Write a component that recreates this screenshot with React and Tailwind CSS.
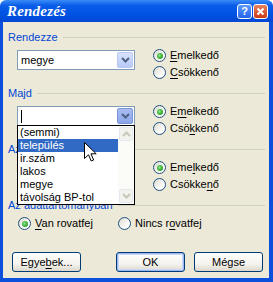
import React from 'react';

const blueText = 'text-[#0046D5]';

function Acc({ text, i }) {
  if (i == null) return <span>{text}</span>;
  return (
    <span>
      {text.slice(0, i)}
      <span className="underline underline-offset-[2px]">{text[i]}</span>
      {text.slice(i + 1)}
    </span>
  );
}

function Radio({ checked, text, u }) {
  return (
    <div className="h-[17px] flex items-center gap-[4px]">
      <div className="w-[13px] h-[13px] rounded-full border border-[#1C5180] bg-[linear-gradient(135deg,#DCDAD0,#FFFFFF_75%)] flex items-center justify-center">
        {checked && (
          <div className="w-[6px] h-[6px] rounded-full bg-[radial-gradient(circle_at_40%_40%,#8CE28C,#21A121_70%)]" />
        )}
      </div>
      <Acc text={text} i={u} />
    </div>
  );
}

function Chevron({ color = '#4D6185' }) {
  return (
    <svg width="9" height="6" viewBox="0 0 9 6">
      <path d="M1 1 L4.5 4.5 L8 1" fill="none" stroke={color} strokeWidth="2" />
    </svg>
  );
}

function Combo({ value, hot }) {
  return (
    <div className="w-[118px] h-[20px] border border-[#7F9DB9] bg-white flex items-center">
      <div className="flex-1 pl-[3px] flex items-center">
        {value ? value : <div className="w-px h-[13px] bg-black" />}
      </div>
      <div
        className={
          'w-[16px] h-[16px] mr-px rounded-[2px] border flex items-center justify-center ' +
          (hot
            ? 'border-[#7D96DA] bg-[linear-gradient(180deg,#A9BDF1,#8CA6EB)]'
            : 'border-[#B9C9EF] bg-[linear-gradient(180deg,#D8E3FC,#B7C9F6)]')
        }
      >
        <Chevron />
      </div>
    </div>
  );
}

function GroupLabel({ children }) {
  return (
    <div className="h-[14px] flex items-center gap-[5px]">
      <span className={blueText}>{children}</span>
      <div className="flex-1 h-px bg-[#D0D0BF]" />
    </div>
  );
}

function SortGroup({ label, value, hot, u1, u2, top }) {
  return (
    <div className={top}>
      <GroupLabel>{label}</GroupLabel>
      <div className="mt-[3px] flex pl-[9px] h-[34px]">
        <div className="mt-[3px]">
          <Combo value={value} hot={hot} />
        </div>
        <div className="ml-[18px] flex flex-col">
          <Radio checked text="Emelkedő" u={u1} />
          <Radio text="Csökkenő" u={u2} />
        </div>
      </div>
    </div>
  );
}

function Btn({ children, def, className = '' }) {
  return (
    <div
      className={
        'w-[69px] h-[20px] rounded-[3px] border border-[#003C74] bg-[linear-gradient(180deg,#FFFFFF,#F4F3EE_60%,#DCD8CC)] flex items-center justify-center ' +
        (def ? 'shadow-[inset_0_0_0_1px_#9DB7F2,inset_0_0_0_2px_#CAD9FA] ' : '') +
        className
      }
    >
      {children}
    </div>
  );
}

const items = ['(semmi)', 'település', 'ir.szám', 'lakos', 'megye', 'távolság BP-tol'];

export default function App() {
  return (
    <div className="w-[273px] h-[282px] relative flex flex-col bg-white text-black text-[11px] leading-[13px] font-['Liberation_Sans',Arial,sans-serif]">
      <div className="h-[22px] rounded-t-[6px] bg-[linear-gradient(180deg,#3A8CF8_0%,#0A5DE8_25%,#0054E3_60%,#0047D4_100%)] flex items-center pl-[7px] pr-[5px]">
        <span className="flex-1 text-white font-bold italic text-[15px] font-['Liberation_Serif',serif] tracking-[0.2px]">
          Rendezés
        </span>
        <div className="w-[15px] h-[15px] rounded-[3px] border border-white bg-[linear-gradient(180deg,#5C9BFF,#2564E8)] flex items-center justify-center text-white font-bold text-[11px]">
          ?
        </div>
        <div className="ml-px w-[15px] h-[15px] rounded-[3px] border border-white bg-[linear-gradient(180deg,#E8825E,#CB3A14)] flex items-center justify-center">
          <svg width="9" height="9" viewBox="0 0 9 9">
            <path d="M1.5 1.5 L7.5 7.5 M7.5 1.5 L1.5 7.5" stroke="white" strokeWidth="2" />
          </svg>
        </div>
      </div>

      <div className="flex-1 flex flex-col border-l-[3px] border-r-[4px] border-b-[4px] border-[#0B4FDA] bg-[#ECE9D8] pl-[5px] pr-[4px] pt-[8px]">
        <SortGroup label="Rendezze" value="megye" u1={0} u2={0} />
        <SortGroup label="Majd" hot u1={1} u2={3} top="mt-[5px]" />
        <SortGroup label="Azután" value="" u1={3} u2={6} top="mt-[5px]" />

        <div className="mt-[5px]">
          <GroupLabel>Az adattartományban</GroupLabel>
          <div className="mt-[3px] flex pl-[10px]">
            <div className="w-[100px]">
              <Radio checked text="Van rovatfej" u={0} />
            </div>
            <Radio text="Nincs rovatfej" u={7} />
          </div>
        </div>

        <div className="mt-[20px] flex pl-[4px]">
          <Btn>
            <Acc text="Egyebek..." i={4} />
          </Btn>
          <Btn def className="ml-[35px]">OK</Btn>
          <Btn className="ml-[9px]">Mégse</Btn>
        </div>
      </div>

      <div className="absolute left-[17px] top-[125px] w-[118px] h-[80px] border border-black bg-white flex">
        <div className="flex-1 flex flex-col">
          {items.map((it, i) => (
            <div
              key={it}
              className={'h-[13px] pl-[2px] ' + (i === 1 ? 'bg-[#316AC5] text-white' : '')}
            >
              {it}
            </div>
          ))}
        </div>
        <div className="w-[16px] flex flex-col bg-[#FBFBF8]">
          <div className="h-[14px] m-px rounded-[2px] border border-[#E4E8F1] bg-[#F3F3EE] flex items-center justify-center">
            <svg width="9" height="6" viewBox="0 0 9 6">
              <path d="M1 5 L4.5 1.5 L8 5" fill="none" stroke="#C9C7BA" strokeWidth="2" />
            </svg>
          </div>
          <div className="flex-1" />
          <div className="h-[14px] m-px rounded-[2px] border border-[#E4E8F1] bg-[#F3F3EE] flex items-center justify-center">
            <Chevron color="#C9C7BA" />
          </div>
        </div>
      </div>

      <svg className="absolute left-[84px] top-[142px]" width="14" height="21" viewBox="0 0 14 21">
        <path
          d="M0.5 0.5 L0.5 16.5 L4.5 12.8 L7.2 19 L9.6 18 L7 11.8 L12.2 11.8 Z"
          fill="white"
          stroke="black"
          strokeWidth="1"
          strokeLinejoin="miter"
        />
      </svg>
    </div>
  );
}
